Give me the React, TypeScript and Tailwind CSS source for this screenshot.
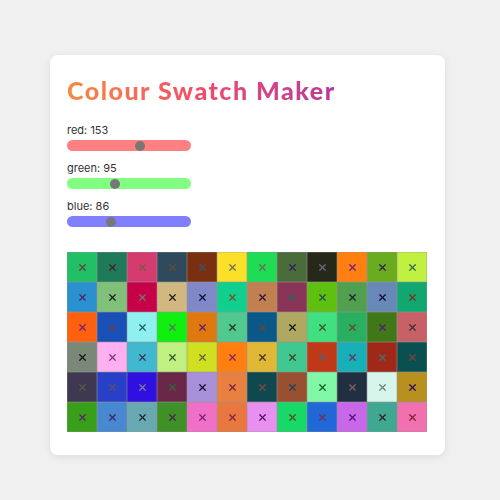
import { X } from "lucide-react";

// swatch colour + colour of the little cross inside it
const swatches: [string, string][] = [
  ["#22c065", "#6b3a3a"], ["#1f7a5a", "#4a1830"], ["#d63b70", "#7a5a40"], ["#2f4a5c", "#6a4a30"], ["#7a3010", "#305870"], ["#fbe02a", "#6a6a50"],
  ["#1fdc55", "#6a6a50"], ["#4a6b3a", "#3a1860"], ["#26291a", "#6a6a80"], ["#ff7f10", "#702080"], ["#6aac20", "#302050"], ["#c0f040", "#306850"],

  ["#2a90d0", "#502060"], ["#80c078", "#102010"], ["#c8004a", "#6a8060"], ["#d0b880", "#201810"], ["#8088c8", "#100830"], ["#10d090", "#7a5020"],
  ["#c08050", "#301040"], ["#8a3458", "#206860"], ["#60c010", "#205050"], ["#50a050", "#202030"], ["#6888b8", "#100830"], ["#10a870", "#7a3020"],

  ["#ff6010", "#702080"], ["#1850b8", "#704040"], ["#90f0f0", "#106060"], ["#10f010", "#607060"], ["#e07810", "#601870"], ["#50c890", "#203010"],
  ["#0a5888", "#704030"], ["#b0a860", "#101010"], ["#40e080", "#405020"], ["#28b060", "#704030"], ["#407818", "#502070"], ["#c86068", "#403030"],

  ["#7a8878", "#101010"], ["#ffb0f0", "#803080"], ["#40b8d0", "#403050"], ["#c0f080", "#305020"], ["#d0e020", "#506050"], ["#ff8010", "#802070"],
  ["#e0b838", "#403020"], ["#40c890", "#404020"], ["#c03818", "#506080"], ["#18b0b8", "#703050"], ["#a02818", "#407070"], ["#0a5050", "#804040"],

  ["#403850", "#506040"], ["#2840c8", "#605060"], ["#3010e0", "#808090"], ["#6a2848", "#306840"], ["#a890d8", "#100830"], ["#e88040", "#702040"],
  ["#104850", "#804840"], ["#985030", "#204060"], ["#80f8a8", "#106020"], ["#203040", "#806060"], ["#d8f5ec", "#708080"], ["#b89020", "#300860"],

  ["#38a018", "#602070"], ["#4888d0", "#402060"], ["#68a8b0", "#202030"], ["#409028", "#502050"], ["#f070c8", "#702070"], ["#e87840", "#802040"],
  ["#e890f0", "#501070"], ["#18d868", "#505020"], ["#2068d8", "#703050"], ["#c868e8", "#501070"], ["#40a890", "#302020"], ["#f070b0", "#802030"],
];

const sliders = [
  { name: "red", value: 153, track: "bg-[#ff8080]" },
  { name: "green", value: 95, track: "bg-[#80ff80]" },
  { name: "blue", value: 86, track: "bg-[#8080ff]" },
];

function Slider({ name, value, track }: { name: string; value: number; track: string }) {
  return (
    <div className="mb-[10px]">
      <div className="text-[11px] leading-[14px] text-[#333]">{name}: {value}</div>
      <div className={`relative mt-[3px] h-[11px] w-[124px] rounded-full ${track}`}>
        {/* thumb */}
        <div
          className="absolute top-[0.5px] h-[10px] w-[10px] -translate-x-1/2 rounded-full bg-[#777]"
          style={{ left: `${6 + (value / 255) * 112}px` }}
        />
      </div>
    </div>
  );
}

export default function App() {
  return (
    <div className="min-h-screen bg-[#f0f0f0] pl-[50px] pt-[55px] font-['Inter',sans-serif]">
      <div className="w-[395px] h-[400px] rounded-lg bg-white px-[17px] pt-[17px] shadow-[0_2px_8px_rgba(0,0,0,0.08)]">
        <h1 className="bg-gradient-to-r from-[#f88a40] via-[#f04a68] to-[#b8389c] bg-clip-text text-[25px] font-black leading-[36px] text-transparent font-['Lato',sans-serif] tracking-[1.5px] w-fit">
          Colour Swatch Maker
        </h1>

        <div className="mt-[15px]">
          {sliders.map((s) => (
            <Slider key={s.name} {...s} />
          ))}
        </div>

        <div className="mt-[25px] grid w-[360px] grid-cols-12">
          {swatches.map(([bg, x], i) => (
            <div
              key={i}
              className="flex h-[30px] items-center justify-center shadow-[inset_0_0_0_0.5px_rgba(150,150,150,0.6)]"
              style={{ backgroundColor: bg }}
            >
              <X size={11} strokeWidth={2.6} color={x} />
            </div>
          ))}
        </div>
      </div>
    </div>
  );
}
